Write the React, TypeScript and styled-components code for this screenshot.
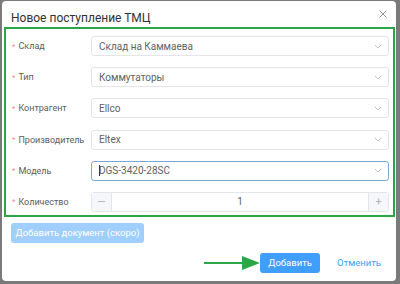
import React from "react";
import styled, { createGlobalStyle } from "styled-components";

const GlobalStyle = createGlobalStyle`
  html, body {
    margin: 0;
    padding: 0;
    background: #7a7a7a;
  }
  body {
    font-family: Roboto, "Liberation Sans", sans-serif;
    overflow: hidden;
  }
`;

const Dialog = styled.div`
  box-sizing: border-box;
  margin: 1px 4px 0 2px;
  width: 394px;
  height: 280px;
  background: #fff;
  border-radius: 4px;
  display: flex;
  flex-direction: column;
`;

const Header = styled.div`
  display: flex;
  justify-content: space-between;
  align-items: flex-start;
  height: 26px;
  padding: 10px 9px 0 9px;
  box-sizing: border-box;
`;

const Title = styled.span`
  font-size: 12px;
  line-height: 14px;
  color: #303133;
`;

const Close = styled.button`
  border: none;
  background: transparent;
  padding: 0;
  margin-top: -1px;
  margin-right: 0;
  width: 8px;
  height: 8px;
  display: flex;
  cursor: pointer;
`;

const Frame = styled.div`
  margin: 0 1px 0 2px;
  border: 2px solid #2aa645;
  padding: 7px 4px 3px 6px;
  display: grid;
  grid-template-columns: 79px 1fr;
  row-gap: 11.2px;
  align-items: center;
`;

const Label = styled.label`
  font-size: 9px;
  color: #5a5c61;
  display: flex;
  align-items: center;
  white-space: nowrap;

  &::before {
    content: "*";
    color: #f08a8a;
    margin-right: 3px;
    font-size: 8px;
  }
`;

const Field = styled.div<{ $focused?: boolean }>`
  height: 20px;
  box-sizing: border-box;
  border: 1px solid ${p => (p.$focused ? "#7aa7d4" : "#e2e5ea")};
  border-radius: 3px;
  display: flex;
  align-items: center;
  padding: 0 6px 0 7px;
  font-size: 10px;
  color: #606266;
  background: #fff;
`;

const Value = styled.span`
  flex: 1;
  display: flex;
  align-items: center;
`;

const Caret = styled.span`
  display: inline-block;
  width: 1px;
  height: 11px;
  background: #303133;
  margin-right: -1px;
`;

const Stepper = styled.div`
  height: 20px;
  box-sizing: border-box;
  border: 1px solid #e2e5ea;
  border-radius: 3px;
  display: flex;
  align-items: stretch;
  font-size: 10px;
  color: #606266;
`;

const StepButton = styled.span<{ $side: "left" | "right" }>`
  width: 19px;
  background: #f5f7fa;
  color: #b0b3b8;
  display: flex;
  align-items: center;
  justify-content: center;
  font-size: 11px;
  ${p => (p.$side === "left" ? "border-right: 1px solid #e2e5ea;" : "border-left: 1px solid #e2e5ea;")}
`;

const StepValue = styled.span`
  flex: 1;
  display: flex;
  align-items: center;
  justify-content: center;
`;

const DocButton = styled.button`
  align-self: flex-start;
  margin: 6px 0 0 9px;
  height: 20px;
  width: 133px;
  border: none;
  border-radius: 3px;
  background: #a0cfff;
  color: #fff;
  font-family: inherit;
  font-size: 9.5px;
  padding: 0;
`;

const Footer = styled.div`
  display: flex;
  justify-content: flex-end;
  align-items: center;
  margin-top: 10px;
  padding-right: 15px;
`;

const PrimaryButton = styled.button`
  height: 20px;
  width: 60px;
  border: none;
  border-radius: 3px;
  background: #409eff;
  color: #fff;
  font-family: inherit;
  font-size: 9.5px;
  padding: 0;
`;

const TextButton = styled.button`
  border: none;
  background: transparent;
  color: #409eff;
  font-family: inherit;
  font-size: 9.5px;
  padding: 0;
  margin-left: 17px;
`;

const Chevron = () => (
  <svg width="8" height="5" viewBox="0 0 8 5">
    <path d="M0.8 0.8 L4 4 L7.2 0.8" fill="none" stroke="#c0c4cc" strokeWidth="1" />
  </svg>
);

const Arrow = () => (
  <svg width="56" height="16" viewBox="0 0 56 16">
    <line x1="0" y1="8" x2="40" y2="8" stroke="#2aa645" strokeWidth="2.2" />
    <polygon points="38,1 56,8 38,15" fill="#2aa645" />
  </svg>
);

const fields = [
  { label: "Склад", value: "Склад на Каммаева" },
  { label: "Тип", value: "Коммутаторы" },
  { label: "Контрагент", value: "Ellco" },
  { label: "Производитель", value: "Eltex" },
  { label: "Модель", value: "DGS-3420-28SC", focused: true },
];

const App = () => (
  <>
    <GlobalStyle />
    <Dialog>
      <Header>
        <Title>Новое поступление ТМЦ</Title>
        <Close aria-label="close">
          <svg width="8" height="8" viewBox="0 0 8 8">
            <path d="M0.5 0.5 L7.5 7.5 M7.5 0.5 L0.5 7.5" stroke="#909399" strokeWidth="1" />
          </svg>
        </Close>
      </Header>
      <Frame>
        {fields.map(f => (
          <React.Fragment key={f.label}>
            <Label>{f.label}</Label>
            <Field $focused={f.focused}>
              <Value>
                {f.focused && <Caret />}
                {f.value}
              </Value>
              <Chevron />
            </Field>
          </React.Fragment>
        ))}
        <Label>Количество</Label>
        <Stepper>
          <StepButton $side="left">—</StepButton>
          <StepValue>1</StepValue>
          <StepButton $side="right">+</StepButton>
        </Stepper>
      </Frame>
      <DocButton>Добавить документ (скоро)</DocButton>
      <Footer>
        <Arrow />
        <PrimaryButton>Добавить</PrimaryButton>
        <TextButton>Отменить</TextButton>
      </Footer>
    </Dialog>
  </>
);

export default App;
